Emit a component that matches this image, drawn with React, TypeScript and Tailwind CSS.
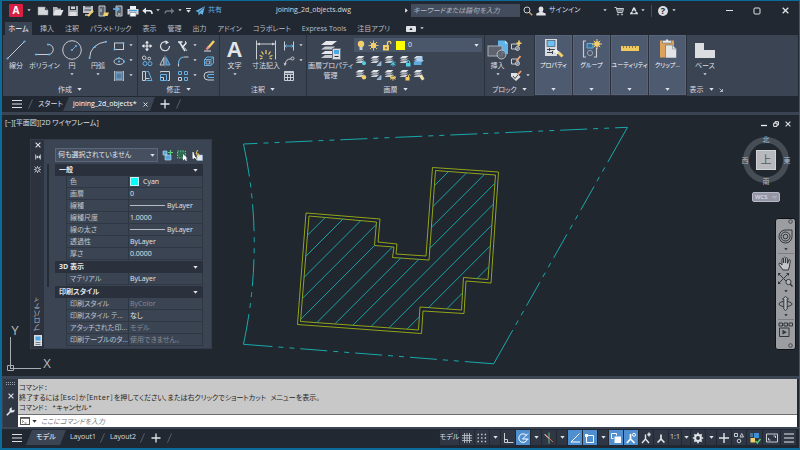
import type { ReactNode } from "react";

const BLUE = "#62b1e6";
const GREY = "#c9cdd4";
const YELLOW = "#f3cf6b";

type IconProps = { w?: number; h?: number; box?: string; children: ReactNode };

// Line icon base: light grey strokes, 1px by default
function Icon({ w = 12, h = 12, box, children }: IconProps) {
  return (
    <svg
      width={w}
      height={h}
      viewBox={box ?? `0 0 ${w} ${h}`}
      fill="none"
      stroke={GREY}
      strokeWidth="1"
      className="block shrink-0"
      aria-hidden="true"
    >
      {children}
    </svg>
  );
}

function Caret({ dark = false }: { dark?: boolean }) {
  return (
    <svg width="5" height="3" viewBox="0 0 5 3" className="block shrink-0" aria-hidden="true">
      <path d="M0.3 0H4.7L2.5 2.8Z" fill={dark ? "#333" : "#dfe2e7"} />
    </svg>
  );
}

function TinyCaret({ dark = false }: { dark?: boolean }) {
  return (
    <svg width="4" height="3" viewBox="0 0 4 3" className="block shrink-0" aria-hidden="true">
      <path d="M0.3 0.3H3.7L2 2.3Z" fill={dark ? "#222" : "#d5d8dd"} />
    </svg>
  );
}

function Hamburger() {
  return (
    <Icon w={10} h={10}>
      <path d="M0 1.5H10M0 5H10M0 8.5H10" stroke="#dcdfe4" strokeWidth="1.2" />
    </Icon>
  );
}

function Slash() {
  return (
    <Icon w={5} h={10}>
      <path d="M4.5 0.5L0.5 9.5" stroke="#56606e" />
    </Icon>
  );
}

function Plus() {
  return (
    <Icon w={10} h={10}>
      <path d="M5 0.5V9.5M0.5 5H9.5" stroke="#e3e5e9" strokeWidth="1.3" />
    </Icon>
  );
}

function Cross({ size = 6 }: { size?: number }) {
  return (
    <Icon w={size} h={size} box="0 0 6 6">
      <path d="M0.6 0.6L5.4 5.4M5.4 0.6L0.6 5.4" stroke="#dfe2e7" strokeWidth="1.1" />
    </Icon>
  );
}

function Slot({ label, className, children }: { label: string; className?: string; children: ReactNode }) {
  return (
    <button aria-label={label} className={`flex shrink-0 items-center justify-center ${className ?? "h-4 w-[15px]"}`}>
      {children}
    </button>
  );
}

/* ---------- title bar ---------- */

const quickAccess: { label: string; icon: ReactNode }[] = [
  {
    label: "新規",
    icon: <path d="M1 2H8L11 5V10H1Z M8 2V5H11" fill="#d4d6da" stroke="#8e949e" strokeWidth="0.5" />,
  },
  {
    label: "開く",
    icon: (
      <>
        <path d="M1 10V2H5L6 3.5H9V5" fill="#aeb2b8" stroke="none" />
        <path d="M1 10.5L3.2 5H11.5L9 10.5Z" fill="#dfe1e4" stroke="none" />
      </>
    ),
  },
  {
    label: "上書き保存",
    icon: (
      <>
        <path d="M1 1H11V11H1Z" fill="#a9adb4" stroke="none" />
        <path d="M3 1H9V5H3Z" fill="#2e3541" stroke="none" />
        <path d="M2.5 7H9.5V11H2.5Z" fill="#dedfe2" stroke="none" />
        <path d="M4 1.5H8V4H4Z" fill="#cfd2d6" stroke="none" />
      </>
    ),
  },
  {
    label: "名前を付けて保存",
    icon: (
      <>
        <path d="M1 1H11V8H1Z" fill="#bfc2c7" stroke="none" />
        <path d="M3 1.8H9M2.5 5H9" stroke="#3a4250" />
        <path d="M3 9H8V11H3Z" fill="#989ea7" stroke="none" />
        <path d="M6 11L11 5.5" stroke={YELLOW} strokeWidth="2" />
      </>
    ),
  },
  {
    label: "Web から開く",
    icon: (
      <>
        <path d="M2 1H8V11H2Z" fill="#5b626e" stroke="#c5c8cd" />
        <path d="M6 11L7 7.5H12L10.6 11Z" fill={YELLOW} stroke="none" />
        <path d="M4 3.5V7" stroke="#d8dade" />
      </>
    ),
  },
  {
    label: "Web に保存",
    icon: (
      <>
        <path d="M4 1H10V11H4Z" fill="#5b626e" stroke="#c5c8cd" />
        <path d="M1 4H6M4.5 2L7 4L4.5 6" stroke={BLUE} strokeWidth="1.4" />
        <path d="M6 9H8.5" stroke="#eee" />
      </>
    ),
  },
  {
    label: "印刷",
    icon: (
      <>
        <path d="M3 1H9V4H3Z" fill="#f0f1f3" stroke="none" />
        <path d="M0.5 4H11.5V9.5H0.5Z" fill="#d5d8dc" stroke="none" />
        <path d="M2 5.6H10" stroke="#3e9fdd" strokeWidth="1.2" />
        <path d="M3 7.5H9V11.5H3Z" fill="#fff" stroke="#6d747f" strokeWidth="0.6" />
      </>
    ),
  },
];

function TitleBar() {
  return (
    <header className="flex h-[19px] items-center text-[7px]">
      <div className="flex w-[274px] shrink-0 items-center">
        <button aria-label="アプリケーション メニュー" className="ml-[7px] flex items-center gap-1">
          <span className="flex h-[13px] w-[14px] items-center justify-center rounded-[1px] bg-[#d91e43] text-[10px] leading-[13px] font-bold text-white">
            A
          </span>
          <TinyCaret />
        </button>
        <div className="ml-1 flex">
          {quickAccess.map((q) => (
            <Slot key={q.label} label={q.label}>
              <Icon>{q.icon}</Icon>
            </Slot>
          ))}
        </div>
        <button aria-label="元に戻す" className="ml-0.5 flex w-[18px] items-center justify-between">
          <Icon w={11} h={8}>
            <path d="M4 0.5V7L0.3 3.8Z" fill="#e8eaed" stroke="none" />
            <path d="M3 3.8H8Q10 4 10 7" stroke="#e8eaed" strokeWidth="1.5" />
          </Icon>
          <TinyCaret />
        </button>
        <button aria-label="やり直し" className="ml-1 flex w-[18px] items-center justify-between">
          <Icon w={11} h={8}>
            <path d="M7 1V7L10.4 4Z" fill="#6f7783" stroke="none" />
            <path d="M7.5 4H3Q1.3 4 1 6.6" stroke="#6f7783" strokeWidth="1.3" />
          </Icon>
          <TinyCaret />
        </button>
        <button aria-label="カスタマイズ" className="ml-1 flex flex-col items-center gap-px">
          <span className="h-px w-[5px] bg-[#dfe2e7]" />
          <Caret />
        </button>
        <button className="ml-1 flex items-center gap-[3px] text-[#62b1e6]">
          <Icon w={10} h={10}>
            <path d="M9.8 0.3L0.5 5L3.2 6.3L3.7 9.6L5.3 7.4L7.8 8.8Z" fill={BLUE} stroke="none" />
            <path d="M9 1.5L3.6 6.2" stroke="#222831" strokeWidth="0.6" />
          </Icon>
          共有
        </button>
      </div>

      <h1 className="w-[80px] shrink-0 whitespace-nowrap text-[#d7dade]">joining_2d_objects.dwg</h1>

      <div className="flex flex-1 items-center pl-[49px]">
        <Icon w={3} h={5}>
          <path d="M0.2 0.3V4.7L2.8 2.5Z" fill="#eee" stroke="none" />
        </Icon>
        <input
          aria-label="検索"
          placeholder="キーワードまたは語句を入力"
          className="ml-[3px] h-[13px] w-[109px] bg-[#434c5c] px-0.5 italic outline-none placeholder:text-[#b4b9c1]"
        />
        <Slot label="検索を実行">
          <Icon w={10} h={10}>
            <circle cx="4" cy="4" r="3" />
            <path d="M6.2 6.2L9.3 9.3" stroke="#c9a15c" strokeWidth="1.5" />
          </Icon>
        </Slot>
        <button className="ml-px flex items-center gap-[3px] whitespace-nowrap">
          <Icon w={10} h={10}>
            <path
              d="M2.6 3A2.4 2.6 0 0 1 7.4 3Q7.2 5.4 6.3 6L9.7 7.5V9.6H0.3V7.5L3.7 6Q2.8 5.4 2.6 3Z"
              fill="#e0e2e6"
              stroke="none"
            />
          </Icon>
          サインイン
        </button>
      </div>

      <div className="flex items-center">
        <TinyCaret />
        <Slot label="App Store" className="ml-1 h-4 w-[15px]">
          <Icon w={10} h={10}>
            <path d="M0.5 1.5H2.3L3.5 6.5H8.5L9.5 2.5H2.6" />
            <path d="M3 4H9M5 2.5V6.5M7 2.5V6.5" strokeWidth="0.7" />
            <circle cx="4" cy="8.5" r="0.6" />
            <circle cx="8" cy="8.5" r="0.6" />
          </Icon>
        </Slot>
        <Slot label="Autodesk">
          <Icon w={10} h={10}>
            <path d="M4.2 1.5H5.8L7.6 5.4H5.9L5 3.4L4.1 5.4H2.4Z" fill="#e3e5e9" stroke="none" />
            <path d="M0.8 8.3L1.9 6H3.8L3.2 7.2H6.8L6.2 6H8.1L9.2 8.3Z" fill="#e3e5e9" stroke="none" />
          </Icon>
        </Slot>
        <TinyCaret />
        <span className="mx-1.5 h-3 w-px bg-[#444c59]" />
        <Slot label="ヘルプ" className="h-4 w-[10px]">
          <span className="flex size-[10px] items-center justify-center rounded-full bg-[#dcdee2] text-[9px] leading-[10px] font-bold text-[#222831]">
            ?
          </span>
        </Slot>
        <span className="ml-1">
          <TinyCaret />
        </span>
        <Slot label="最小化" className="ml-11 h-4 w-[18px]">
          <Icon w={7} h={7}>
            <path d="M0 3.5H7" stroke="#dfe2e7" />
          </Icon>
        </Slot>
        <Slot label="最大化" className="ml-[10px] h-4 w-[18px]">
          <Icon w={8} h={8}>
            <rect x="1" y="1" width="6" height="6" rx="1" stroke="#dfe2e7" />
          </Icon>
        </Slot>
        <Slot label="閉じる" className="mr-[5px] ml-[10px] h-4 w-[18px]">
          <Cross size={7} />
        </Slot>
      </div>
    </header>
  );
}

/* ---------- ribbon ---------- */

const ribbonTabs = [
  "挿入",
  "注釈",
  "パラメトリック",
  "表示",
  "管理",
  "出力",
  "アドイン",
  "コラボレート",
  "Express Tools",
  "注目アプリ",
];

function RibbonTabs() {
  return (
    <nav className="flex h-[15px] items-end pl-[3px] text-[7px] leading-[13px] whitespace-nowrap text-[#b9bec7]">
      <button className="h-[13px] w-[27px] bg-[#3b4453] text-white">ホーム</button>
      <div className="ml-2 flex gap-[11px]">
        {ribbonTabs.map((t) => (
          <button key={t}>{t}</button>
        ))}
      </div>
      <button aria-label="リボンを最小化" className="ml-4 flex h-[13px] items-center gap-1">
        <Icon w={10} h={6}>
          <rect width="10" height="6" rx="1" fill="#dfe2e7" stroke="none" />
          <path d="M5 1.6L6.6 4H3.4Z" fill="#222831" stroke="none" />
        </Icon>
        <TinyCaret />
      </button>
    </nav>
  );
}

type PanelProps = { title: string; width: string; children: ReactNode; launcher?: boolean };

function Panel({ title, width, children, launcher }: PanelProps) {
  return (
    <section className={`flex flex-col justify-between bg-[#3b4453] pt-[3px] pb-0.5 ${width}`}>
      <div className="flex">{children}</div>
      <button className="flex items-center justify-center gap-[5px] text-[7px] leading-[9px]">
        {title}
        <Caret />
        {launcher && (
          <Icon w={4} h={4}>
            <path d="M0.5 0.5L3.5 3.5M3.5 1V3.5H1" strokeWidth="0.8" />
          </Icon>
        )}
      </button>
    </section>
  );
}

type BigButtonProps = { label: ReactNode; width: string; caret?: boolean; children: ReactNode };

function BigButton({ label, width, caret, children }: BigButtonProps) {
  return (
    <button className={`flex shrink-0 flex-col items-center whitespace-nowrap ${width}`}>
      <span className="flex h-[23px] items-center">{children}</span>
      <span className="text-[7px] leading-[10px]">{label}</span>
      {caret && (
        <span className="pt-0.5">
          <TinyCaret />
        </span>
      )}
    </button>
  );
}

function SmallButton({ label, caret, children }: { label: string; caret?: boolean; children: ReactNode }) {
  return (
    <button aria-label={label} className="flex h-[15px] items-center gap-1">
      <Icon>{children}</Icon>
      {caret && <TinyCaret />}
    </button>
  );
}

function Node({ x, y }: { x: number; y: number }) {
  return <circle cx={x} cy={y} r="1.1" fill={BLUE} stroke="none" />;
}

function DrawPanel() {
  return (
    <Panel title="作成" width="w-[134px]">
      <BigButton label="線分" width="w-[26px]">
        <Icon w={20} h={20}>
          <path d="M1 19L19 1" />
          <Node x={1.5} y={18.5} />
          <Node x={18.5} y={1.5} />
        </Icon>
      </BigButton>
      <BigButton label="ポリライン" width="w-[31px]">
        <Icon w={22} h={20}>
          <path d="M14 4.5A4.5 4.8 0 0 1 15 14.5H2" />
          <Node x={14} y={4.5} />
          <Node x={15} y={14.5} />
          <Node x={2} y={14.5} />
        </Icon>
      </BigButton>
      <BigButton label="円" width="w-[24px]" caret>
        <Icon w={20} h={20}>
          <circle cx="10" cy="10" r="9.3" />
          <path d="M10 10L14 6" stroke={BLUE} />
          <Node x={10} y={10} />
          <Node x={14} y={6} />
        </Icon>
      </BigButton>
      <BigButton label="円弧" width="w-[28px]" caret>
        <Icon w={20} h={20}>
          <path d="M1.5 18.5Q2 4 18.5 1.5" />
          <Node x={1.6} y={18} />
          <Node x={7} y={7} />
          <Node x={18} y={1.8} />
        </Icon>
      </BigButton>
      <div className="ml-px flex flex-col">
        <SmallButton label="長方形" caret>
          <rect x="1.5" y="3" width="9" height="6.5" />
          <Node x={1.6} y={9.4} />
          <Node x={10.4} y={3} />
        </SmallButton>
        <SmallButton label="楕円" caret>
          <ellipse cx="6" cy="6.5" rx="5" ry="3" />
          <Node x={6} y={6.5} />
          <Node x={6} y={3.2} />
          <Node x={11} y={6.5} />
        </SmallButton>
        <SmallButton label="ハッチング" caret>
          <path d="M3 3H9V9H3Z" fill="#5a7896" stroke={BLUE} />
          <path d="M1.5 1V11M10.5 1V11M1 2H11M1 10H11" strokeWidth="0.8" />
        </SmallButton>
      </div>
    </Panel>
  );
}

function ModifyPanel() {
  return (
    <Panel title="修正" width="w-[81px]">
      <div className="grid grid-cols-[12px_12px_20px_12px] gap-x-1.5 pl-[3px]">
        <SmallButton label="移動">
          <path d="M6 1.5V10.5M1.5 6H10.5" stroke="#e6e8eb" strokeWidth="1.2" />
          <path d="M6 0.8L8 3.3H4ZM6 11.2L4 8.7H8ZM0.8 6L3.3 4V8ZM11.2 6L8.7 8V4Z" fill="#e6e8eb" stroke="none" />
        </SmallButton>
        <SmallButton label="回転">
          <path d="M8.5 2.5A4.5 4.5 0 1 0 10.5 6" stroke="#dfe1e5" strokeWidth="1.2" />
          <path d="M6.6 0.3V4.6L10 2.4Z" fill="#dfe1e5" stroke="none" />
        </SmallButton>
        <SmallButton label="トリム" caret>
          <path d="M1 2H5.5M2.5 2L8 11M9.5 2.5L5 8" stroke="#e6e8eb" strokeWidth="1.5" />
          <path d="M8.5 1V5M7.5 7.5L10 11" stroke={GREY} />
        </SmallButton>
        <SmallButton label="削除">
          <path d="M11 1L5 8" stroke={YELLOW} strokeWidth="2.4" />
          <path d="M5.5 7L3.5 9.5" stroke="#f08a7d" strokeWidth="2.4" />
          <path d="M1 11H8" stroke="#dfe1e5" />
        </SmallButton>
        <SmallButton label="複写">
          <circle cx="3.2" cy="2.8" r="1.8" />
          <circle cx="8.2" cy="3.6" r="1.4" />
          <circle cx="4" cy="8.5" r="2" stroke={BLUE} />
          <circle cx="9" cy="8.7" r="2" stroke={BLUE} />
        </SmallButton>
        <SmallButton label="鏡像">
          <path d="M4.8 2.5V10H1Z" />
          <path d="M7.2 2.5V10H11Z" stroke={BLUE} fill="#4d6e8e" />
          <path d="M6 0.5V11.5" strokeWidth="0.6" />
        </SmallButton>
        <SmallButton label="フィレット" caret>
          <path d="M1.5 11V8Q2 2.5 7 2" stroke={BLUE} strokeWidth="1.2" />
          <path d="M7 2H11.5M1.5 11.5V9" />
        </SmallButton>
        <SmallButton label="分解">
          <path d="M1.5 4.5L4 2H10.5V8L8 10.5H1.5ZM1.5 4.5H8V10.5M8 4.5L10.5 2" stroke={BLUE} />
          <path d="M3 6H6.5V9H3Z" strokeWidth="0.7" />
        </SmallButton>
        <SmallButton label="ストレッチ">
          <path d="M1.5 1.5H4.5V10.5H1.5Z" />
          <path d="M5.5 1.5H7.5L11 10.5H5.5" stroke={BLUE} />
          <path d="M4 8.5H8.5" />
        </SmallButton>
        <SmallButton label="尺度変更">
          <path d="M1.5 2.5V1.5H10.5V10.5H8.5" />
          <path d="M1.5 4.5H7.5V10.5H1.5Z" stroke={BLUE} />
          <path d="M1.5 7.5H4.5V10.5" />
        </SmallButton>
        <SmallButton label="配列複写" caret>
          <path d="M1.5 1.5H4.5V4.5H1.5ZM7.5 1.5H10.5V4.5H7.5ZM7.5 7.5H10.5V10.5H7.5Z" stroke={BLUE} />
          <path d="M1.5 7.5H4.5V10.5H1.5Z" />
        </SmallButton>
        <SmallButton label="オフセット">
          <path d="M11 2H5A4 4 0 0 0 5 10H11" />
          <path d="M11 4.5H6A1.5 1.5 0 0 0 6 7.5H11" stroke={BLUE} />
        </SmallButton>
      </div>
    </Panel>
  );
}

function AnnotationPanel() {
  return (
    <Panel title="注釈" width="w-[86px]">
      <BigButton label="文字" width="w-[29px]" caret>
        <span className="font-['Liberation_Sans'] text-[22px] leading-[22px] font-bold text-[#e3e5e9]">A</span>
      </BigButton>
      <BigButton label="寸法記入" width="w-[34px]">
        <Icon w={22} h={20}>
          <path d="M1.5 0.5V19.5M20.5 0.5V19.5M2 4H20" />
          <path d="M2 4L5 2.5V5.5ZM20 4L17 2.5V5.5Z" fill={GREY} stroke="none" />
          <path
            d="M11 10V14M6.5 11.5L8.5 14.5M15.5 11.5L13.5 14.5M4.5 15.5L7.5 16.5M17.5 15.5L14.5 16.5M5 19L7.5 18M17 19L14.5 18"
            stroke={YELLOW}
            strokeWidth="1.2"
          />
        </Icon>
      </BigButton>
      <div className="flex flex-col">
        <SmallButton label="長さ寸法" caret>
          <path d="M1.5 1.5V10.5M10.5 1.5V10.5" />
          <path d="M2 6H10M3.5 4.5L2 6L3.5 7.5M8.5 4.5L10 6L8.5 7.5" stroke={BLUE} />
        </SmallButton>
        <SmallButton label="引出線" caret>
          <circle cx="9.5" cy="3.5" r="1.5" />
          <path d="M8 4Q3 3.5 2 9.5" />
          <path d="M0.7 8L1.7 11L3.8 8.5Z" fill={GREY} stroke="none" />
        </SmallButton>
        <SmallButton label="表">
          <path d="M1.5 1.5H10.5V10.5H1.5ZM1.5 4.5H10.5M1.5 7.5H10.5M4.5 4V10.5M7.5 4V10.5" />
          <path d="M1 2.5H11" strokeWidth="1.6" />
        </SmallButton>
      </div>
    </Panel>
  );
}

function Sheets() {
  return (
    <>
      <path d="M3.5 1H9.5L6.5 3.4H0.5Z" fill="#e6e8eb" stroke="none" />
      <path d="M3 4L0.5 5.8H6.5L9.5 3.4" fill="#aab0b9" stroke="none" />
      <path d="M2.5 6.4L0.5 8H6.5L9.5 5.6" fill="#d0d3d8" stroke="none" />
    </>
  );
}

const layerTools: { label: string; mark: ReactNode }[] = [
  { label: "非表示", mark: <circle cx="9" cy="8.2" r="2" fill="#4fd0e8" stroke="none" /> },
  { label: "選択表示", mark: <path d="M7 10.5L11 6.5V10.5Z" fill={BLUE} stroke="#dfe1e5" strokeWidth="0.6" /> },
  { label: "フリーズ", mark: <path d="M9 6V11.5M6.5 7.3L11.5 10.2M11.5 7.3L6.5 10.2" stroke="#4fd0e8" /> },
  {
    label: "ロック",
    mark: (
      <>
        <path d="M8 8V7A1.3 1.3 0 0 1 10.6 7V8" stroke="#4fd0e8" />
        <path d="M7 8H11.5V11.5H7Z" fill="#4fd0e8" stroke="none" />
      </>
    ),
  },
  {
    label: "現在層に設定",
    mark: (
      <>
        <path d="M0.8 7L3.5 5H11.2L8.5 7.5V10H0.8Z" fill="#5fa9dd" stroke="none" />
        <path d="M3.5 1.5H9.5V6.5H3.5Z" fill="#a9cdea" stroke="none" />
      </>
    ),
  },
  { label: "全画層表示", mark: <circle cx="9" cy="8.2" r="2.2" fill={YELLOW} stroke="none" /> },
  { label: "選択表示解除", mark: <path d="M7 10.5L11 6.5V10.5Z" fill={BLUE} stroke="#dfe1e5" strokeWidth="0.6" /> },
  {
    label: "フリーズ解除",
    mark: <path d="M9 5.8V11.6M6.3 7.2L11.6 10.3M11.6 7.2L6.3 10.3M6 8.7H12" stroke={YELLOW} />,
  },
  {
    label: "ロック解除",
    mark: (
      <>
        <path d="M9.5 8V6.5A1.2 1.2 0 0 1 11.7 6.5" stroke={YELLOW} />
        <path d="M6.5 8H10.5V11.5H6.5Z" fill={YELLOW} stroke="none" />
      </>
    ),
  },
  { label: "画層コピー", mark: <path d="M6 7L9 5.5L11.5 10L9 11.5Z" fill="#f1e2ae" stroke="none" /> },
];

function LayerPanel() {
  return (
    <Panel title="画層" width="w-[177px]">
      <BigButton
        width="w-[47px]"
        label={
          <>
            画層プロパティ
            <br />
            管理
          </>
        }
      >
        <Icon w={22} h={20}>
          <path d="M6 1H17L12 5H1Z" fill="#e6e8eb" stroke="none" />
          <path d="M1 9.5L5 6.5H15L12 9.5Z" fill="#c5c9cf" stroke="none" />
          <path d="M1 14L5 11H14L12 14Z" fill="#e6e8eb" stroke="none" />
          <path d="M1 18L5 15H14L12 18Z" fill="#c5c9cf" stroke="none" />
          <rect x="12.5" y="8.5" width="8" height="11" fill="#dadce0" stroke="#6b7584" />
          <rect x="14" y="10" width="5" height="4" fill="#4aa7e6" stroke="none" />
          <path d="M14.5 16.5H18.5" stroke="#333" />
        </Icon>
      </BigButton>
      <div className="flex flex-1 flex-col pr-0.5">
        <div className="flex h-[14px] items-center gap-[3px] bg-[#4a566a] px-[3px]">
          <Icon w={8} h={11}>
            <circle cx="4" cy="4" r="3.2" fill={YELLOW} stroke="none" />
            <path d="M2.5 7H5.5V10H2.5Z" fill="#c9cdd4" stroke="none" />
          </Icon>
          <Icon w={11} h={11}>
            <path d="M5.5 0.5V10.5M0.5 5.5H10.5M2 2L9 9M9 2L2 9" stroke={YELLOW} strokeWidth="0.9" />
            <circle cx="5.5" cy="5.5" r="2.7" fill={YELLOW} stroke="none" />
          </Icon>
          <Icon w={10} h={11}>
            <path d="M5.5 5V3A1.6 1.6 0 0 1 8.8 3V4" stroke={YELLOW} strokeWidth="1.3" />
            <path d="M1 5H7V10.5H1Z" fill={YELLOW} stroke="none" />
            <path d="M4 7V8.8" stroke="#333" />
          </Icon>
          <span className="ml-px size-[9px] bg-[#ffff00]" />
          <select
            aria-label="現在の画層"
            className="h-3 flex-1 appearance-none bg-transparent p-0 text-[7px] text-[#e3e5e9] outline-none"
          >
            <option>0</option>
          </select>
          <Caret />
        </div>
        <div className="mt-0.5 grid w-[73px] grid-cols-5">
          {layerTools.map((t) => (
            <button key={t.label} aria-label={t.label} className="flex h-[14px] items-center pl-px">
              <Icon>
                <Sheets />
                {t.mark}
              </Icon>
            </button>
          ))}
        </div>
      </div>
    </Panel>
  );
}

function BlockPanel() {
  return (
    <Panel title="ブロック" width="w-[49px]">
      <BigButton label="挿入" width="w-[25px]" caret>
        <Icon w={22} h={20}>
          <path d="M11 0.5H18L21 3.5V14H11Z" fill="#5fb4ea" stroke="none" />
          <path d="M18 0.5V3.5H21Z" fill="#c6e3f7" stroke="none" />
          <rect x="1" y="6" width="14" height="10" fill="#5d646f" stroke="#a8adb5" />
          <circle cx="14.5" cy="14.5" r="4.5" fill="#5d646f" fillOpacity="0.8" stroke="#b9bec5" />
        </Icon>
      </BigButton>
      <div className="flex flex-col">
        <SmallButton label="ブロック作成">
          <path d="M1.5 4H8V9H1.5Z" />
          <circle cx="7.5" cy="8.5" r="2" />
          <path d="M9 0.5V6M6.5 3.2H11.5" stroke={YELLOW} strokeWidth="1.6" />
        </SmallButton>
        <SmallButton label="ブロック編集">
          <path d="M1.5 4H8V9H1.5Z" />
          <circle cx="7.5" cy="8.5" r="2" />
          <path d="M10.5 1L6.5 6" stroke="#f3a26b" strokeWidth="1.8" />
        </SmallButton>
        <SmallButton label="属性編集" caret>
          <path d="M1 3H7L10.5 7L6 11L1 6.5Z" fill="#dfe1e5" stroke="none" />
          <path d="M3 6L5 8.5L8 5" stroke="#3b4453" />
          <path d="M11 1L7.5 5" stroke="#f3a26b" strokeWidth="1.8" />
        </SmallButton>
      </div>
    </Panel>
  );
}

const collapsedPanels: { label: string; icon: ReactNode }[] = [
  {
    label: "プロパティ",
    icon: (
      <>
        <rect x="1" y="1" width="12" height="17" fill="#d9dbdf" stroke="none" />
        <rect x="3" y="2.5" width="8" height="6" fill="#6fc0f1" stroke="#3a4250" strokeWidth="0.6" />
        <path d="M3 11.5H11M3 14.5H9M5.5 10V13M8.5 13V16" stroke="#3a4250" />
        <path d="M10.5 12L14.5 15" stroke="#f0f1f3" strokeWidth="3" />
        <path d="M14.5 14.5L18.5 18.5" stroke={YELLOW} strokeWidth="3" />
      </>
    ),
  },
  {
    label: "グループ",
    icon: (
      <>
        <path d="M4 3H1.5V19H4M12 19H14.5V10" strokeWidth="1.2" />
        <path d="M5 5.5H11V10H5Z" stroke={BLUE} fill="#3d6f99" />
        <circle cx="8" cy="15" r="2.6" stroke="#9ba1aa" />
        <path d="M15 1V11M10 6H20M11.8 2.8L18.2 9.2M18.2 2.8L11.8 9.2" stroke={YELLOW} />
        <circle cx="15" cy="6" r="2.8" fill={YELLOW} stroke="none" />
      </>
    ),
  },
  {
    label: "ユーティリティ",
    icon: (
      <>
        <rect x="1" y="8" width="18" height="5" fill="#f0c960" stroke="none" />
        <path d="M3.5 8V10M6.5 8V10M9.5 8V10M12.5 8V10M15.5 8V10" stroke="#7d6b3b" strokeWidth="0.8" />
      </>
    ),
  },
  {
    label: "クリップ...",
    icon: (
      <>
        <path d="M2 2.5H16V19.5H2Z" fill="#dda35a" stroke="none" />
        <path d="M4.5 5V2.5H7.5Q9 -1 10.5 2.5H13.5V5Z" fill="#e6e8eb" stroke="#4d5a70" strokeWidth="0.5" />
        <path d="M7.5 7H14.5L18.5 11V20H7.5Z" fill="#e3e4e7" stroke="#5d646f" strokeWidth="0.6" />
        <path d="M14.5 7V11H18.5" stroke="#8c929b" strokeWidth="0.7" />
      </>
    ),
  },
];

function Ribbon() {
  return (
    <div className="mx-px flex h-[61px] gap-px bg-[#2a313c]">
      <DrawPanel />
      <ModifyPanel />
      <AnnotationPanel />
      <LayerPanel />
      <BlockPanel />
      {collapsedPanels.map((p) => (
        <button
          key={p.label}
          className="mb-px flex w-[37px] flex-col items-center justify-between border border-[#566379] bg-[#4d5a70] pt-0.5 pb-[3px] text-[6px] leading-[10px] whitespace-nowrap text-white"
        >
          <span className="flex flex-col items-center gap-0.5">
            <Icon w={20} h={20}>
              {p.icon}
            </Icon>
            {p.label}
          </span>
          <Caret />
        </button>
      ))}
      <div className="flex flex-1 bg-[#3b4453]">
        <Panel title="表示" width="w-[38px]" launcher>
          <BigButton label="ベース" width="w-[36px]" caret>
            <Icon w={20} h={16}>
              <path d="M0 1H9V8H20V16H0Z" fill="#dcdde0" stroke="none" />
            </Icon>
          </BigButton>
        </Panel>
      </div>
    </div>
  );
}

function FileTabs() {
  return (
    <nav className="flex h-4 items-center pl-[10px] text-[7px] leading-[14px] whitespace-nowrap">
      <button aria-label="ファイル メニュー">
        <Hamburger />
      </button>
      <span className="ml-1.5">
        <Slash />
      </span>
      <button className="ml-[5px] w-[25px]">スタート</button>
      <div className="flex h-[14px] w-[92px] items-center justify-between bg-[#3b4453] pr-[7px] pl-[10px] text-white [clip-path:polygon(6px_0,100%_0,calc(100%-5px)_100%,0_100%)]">
        <button>joining_2d_objects*</button>
        <button aria-label="タブを閉じる">
          <Cross size={5} />
        </button>
      </div>
      <button aria-label="新しい図面" className="ml-[5px]">
        <Plus />
      </button>
      <span className="ml-1.5">
        <Slash />
      </span>
    </nav>
  );
}

/* ---------- drawing area ---------- */

// Phantom linetype: a long dash, then two short ones, repeated
function phantom(end: number, repeats: number) {
  const pattern = [end];
  for (let i = 0; i < repeats; i++) pattern.push(6, 5, 6, 5, 6, 27);
  return [...pattern, 6, 5, 6, 5, 6, end].join(" ");
}

const OUTER =
  "306,213 380,219 378,242 397,244 396,254 426,256 432.5,167.5 498.5,172 491,283 466,281 464,313.5 423,311 421.5,333.5 297.5,324.5";
const INNER =
  "309,216 376.5,222 374.5,245.5 394,247 392.5,257.5 429,260 435.5,170.5 495.5,175 488,279.5 463.5,277.5 461.5,310 420,307 418.5,330 300.5,321.5";

const hatchSums = Array.from({ length: 12 }, (_, i) => 542.7 + 19.35 * i);

function SitePlan() {
  return (
    <svg className="absolute inset-0 size-full" role="img" aria-label="敷地図">
      <defs>
        <clipPath id="footprint">
          <polygon points={INNER} />
        </clipPath>
      </defs>
      <g transform="translate(-2 -115)" fill="none">
        <g stroke="#18a9ad" strokeWidth="1">
          <path d="M243.5 144L627.5 127.3" strokeDasharray={phantom(14, 6)} />
          <path d="M627.5 127.3L493.7 363.8" strokeDasharray={phantom(40, 3)} />
          <path d="M243.5 344.3L493.7 363.8" strokeDasharray={phantom(29, 3)} />
          <path d="M243.5 144Q265 243 243.5 344.3" strokeDasharray={phantom(33, 2)} />
        </g>
        <polygon points={OUTER} fill="#1b1f33" stroke="#93a615" />
        <polygon points={INNER} fill="#21272f" stroke="#93a615" />
        <g clipPath="url(#footprint)" stroke="#1aa3a7">
          {hatchSums.map((s) => (
            <path key={s} d={`M290 ${s - 290}L510 ${s - 510}`} />
          ))}
        </g>
        {/* UCS icon */}
        <path d="M7.5 365.5H13.5V370.5H7.5ZM10.5 337V368M10 368.5H41" stroke="#a9adb2" />
        <g fill="#b4b7bc" fontSize="12" fontFamily="Liberation Sans, sans-serif">
          <text x="11" y="335">
            Y
          </text>
          <text x="43" y="368">
            X
          </text>
        </g>
      </g>
    </svg>
  );
}

type Row = { name: string; value: string; line?: boolean; swatch?: boolean; dim?: boolean };

const sections: { title: string; rows: Row[] }[] = [
  {
    title: "一般",
    rows: [
      { name: "色", value: "Cyan", swatch: true },
      { name: "画層", value: "0" },
      { name: "線種", value: "ByLayer", line: true },
      { name: "線種尺度", value: "1.0000" },
      { name: "線の太さ", value: "ByLayer", line: true },
      { name: "透過性", value: "ByLayer" },
      { name: "厚さ", value: "0.0000" },
    ],
  },
  { title: "3D 表示", rows: [{ name: "マテリアル", value: "ByLayer" }] },
  {
    title: "印刷スタイル",
    rows: [
      { name: "印刷スタイル", value: "ByColor", dim: true },
      { name: "印刷スタイル テ...", value: "なし" },
      { name: "アタッチされた印...", value: "モデル", dim: true },
      { name: "印刷テーブルのタ...", value: "使用できません。", dim: true },
    ],
  },
];

function PropertiesPalette() {
  return (
    <aside className="absolute top-6 left-7 flex w-[182px] border border-[#343c49] bg-[#2c333f] text-[7px]">
      <div className="flex w-[13px] flex-col items-center gap-1.5 py-0.5">
        <button aria-label="閉じる">
          <Cross size={6} />
        </button>
        <button aria-label="自動的に隠す">
          <Icon w={6} h={6}>
            <path d="M0.7 0.5V5.5M5.3 0.5V5.5" />
            <path d="M1 3L3 1.5V4.5ZM5 1.5V4.5L3 3Z" fill="#dfe2e7" stroke="none" />
          </Icon>
        </button>
        <button aria-label="パレット設定">
          <Icon w={7} h={7}>
            <circle cx="3.5" cy="3.5" r="1.8" />
            <path
              d="M0.5 0.5L2 2M6.5 0.5L5 2M0.5 6.5L2 5M6.5 6.5L5 5M3.5 0V1.5M3.5 5.5V7M0 3.5H1.5M5.5 3.5H7"
              strokeWidth="0.8"
            />
          </Icon>
        </button>
        <div className="flex flex-1 flex-col items-center justify-end gap-1">
          <span className="rotate-180 leading-[9px] text-[#aeb3bb] [writing-mode:vertical-rl]">プロパティ</span>
          <Icon w={8} h={11}>
            <rect width="8" height="11" fill="#dadce0" stroke="none" />
            <rect x="1.5" y="1.5" width="5" height="4" fill="#4aa7e6" stroke="none" />
            <path d="M1.5 7.5H6.5M1.5 9.5H6.5" stroke="#4b5260" strokeWidth="0.7" />
          </Icon>
        </div>
      </div>
      <div className="flex flex-1 gap-1.5 bg-[#3b4453] pt-2 pr-2 pb-0.5 pl-[3px]">
        <div className="mt-4 h-[123px] w-0.5 bg-[#262c36]" />
        <div className="flex flex-1 flex-col">
          <div className="mb-0.5 flex items-center gap-1">
            <div className="flex h-[14px] w-[103px] items-center border border-[#5b677a] bg-[#454f60] pr-0.5">
              <select
                aria-label="選択オブジェクト"
                className="h-3 min-w-0 flex-1 appearance-none bg-transparent pl-0.5 text-[7px] text-[#e3e5e9] outline-none"
              >
                <option>何も選択されていません</option>
              </select>
              <Caret />
            </div>
            <div className="flex gap-1">
              <button aria-label="PICKADD 切り替え">
                <Icon w={11} h={11}>
                  <path d="M1 1H5V5H1ZM3 5H9V10H3Z" fill="#58a6da" stroke="#c4def1" strokeWidth="0.6" />
                  <path d="M8.5 0V5M6 2.5H11" stroke="#5bd07d" strokeWidth="1.2" />
                </Icon>
              </button>
              <button aria-label="オブジェクト選択">
                <Icon w={11} h={11}>
                  <rect x="0.5" y="1" width="8" height="7" fill="#2f6b50" stroke="#57c98b" strokeDasharray="1.5 1" />
                  <path d="M6 4V10.5L7.6 9L9 11L10 10.3L8.8 8.4H10.5Z" fill="#fff" stroke="none" />
                </Icon>
              </button>
              <button aria-label="クイック選択">
                <Icon w={11} h={11}>
                  <path d="M5 5H10.5V10.5H5Z" fill="#e6e8eb" stroke="#8fb7d6" strokeWidth="0.6" />
                  <path d="M1 2V8.5L3 7L4.5 9.5" fill="#fff" stroke="#fff" />
                  <path d="M5.5 0L4 4H7L5 8" stroke={YELLOW} />
                </Icon>
              </button>
            </div>
          </div>
          <div className="flex flex-col gap-px">
            {sections.map((s) => (
              <section key={s.title}>
                <h2 className="flex h-3 items-center justify-between bg-[#2a303c] pr-[5px] pl-1 font-bold text-[#e3e5e9]">
                  {s.title}
                  <Caret />
                </h2>
                <div className="pl-[11px]">
                  <table className="w-full table-fixed border-separate border-spacing-0 leading-[11px] whitespace-nowrap">
                    <tbody>
                      {s.rows.map((r) => (
                        <tr key={r.name}>
                          <th
                            scope="row"
                            className="w-[62px] border-b border-l border-[#2f3743] p-0 pl-[3px] text-left font-normal text-[#bfc4cc]"
                          >
                            {r.name}
                          </th>
                          <td
                            className={`border-x border-b border-[#2f3743] p-0 pl-px ${r.dim ? "text-[#858c98]" : "text-[#e3e5e9]"}`}
                          >
                            <span className="flex items-center">
                              {r.swatch && <span className="mr-1 size-[9px] border border-[#c7f3f3] bg-[#00ffff]" />}
                              {r.line && <span className="mr-0.5 h-px w-[35px] bg-[#b5bac2]" />}
                              {r.value}
                            </span>
                          </td>
                        </tr>
                      ))}
                    </tbody>
                  </table>
                </div>
              </section>
            ))}
          </div>
        </div>
      </div>
    </aside>
  );
}

function ViewCube() {
  return (
    <svg
      width="54"
      height="54"
      className="absolute top-[18px] right-1.5"
      role="img"
      aria-label="ViewCube"
      fontSize="7"
      textAnchor="middle"
    >
      <circle cx="27" cy="27" r="20" fill="none" stroke="#474d55" strokeWidth="6" />
      <rect x="17.5" y="17.5" width="19" height="19" fill="#b7b9bd" stroke="#d0d2d5" />
      <text x="27" y="31" fontSize="11" fill="#565a61">
        上
      </text>
      <g fill="#b5b9bf">
        <text x="27" y="9">
          北
        </text>
        <text x="27" y="51">
          南
        </text>
        <text x="6" y="30">
          西
        </text>
        <text x="48" y="30">
          東
        </text>
      </g>
    </svg>
  );
}

const INK = "#33373d";

function NavigationBar() {
  return (
    <div className="absolute top-[103px] right-[3px] flex w-[21px] flex-col items-center rounded-[3px] border border-[#0e1216] bg-[#9b9da0] pb-px">
      <span className="mr-0.5 self-end">
        <Icon w={5} h={5}>
          <circle cx="2.5" cy="2.5" r="1.8" stroke={INK} strokeWidth="0.8" />
        </Icon>
      </span>
      <button aria-label="ステアリング ホイール" className="mt-[5px]">
        <Icon w={15} h={15}>
          <path d="M7.5 1H14V7.5A6.5 6.5 0 1 1 7.5 1Z" stroke={INK} />
          <circle cx="7.5" cy="7.5" r="4.5" stroke={INK} />
          <circle cx="7.5" cy="7.5" r="2.3" stroke={INK} />
        </Icon>
      </button>
      <span className="mt-1">
        <TinyCaret dark />
      </span>
      <span className="mt-0.5 h-px w-4 bg-[#7b7e82]" />
      <button aria-label="画面移動" className="mt-0.5">
        <Icon w={15} h={15}>
          <path
            d="M5 14L1 8.5Q0.6 7 2 7L4 9V3Q4.8 1.6 5.6 3V7V2Q6.6 0.4 7.6 2V7V2.4Q8.7 1 9.6 2.6V7.4L11 3.8Q12.4 3.2 12.3 4.8L11.3 11L10.3 14Z"
            stroke={INK}
            fill="#c3c5c8"
          />
        </Icon>
      </button>
      <button aria-label="ズーム" className="mt-0.5">
        <Icon w={15} h={14}>
          <path d="M1 1L10 10M10 1L1 10" stroke={INK} />
          <path d="M0 0H3L0 3ZM11 0V3L8 0ZM0 11V8L3 11Z" fill={INK} stroke="none" />
          <circle cx="10.5" cy="9" r="2.6" stroke={INK} fill="#b5b7ba" />
          <path d="M12.3 11L14.5 13.5" stroke={INK} strokeWidth="1.4" />
        </Icon>
      </button>
      <span className="mt-[3px]">
        <TinyCaret dark />
      </span>
      <button aria-label="オービット" className="mt-[3px]">
        <Icon w={15} h={15}>
          <ellipse cx="7.5" cy="8" rx="6.5" ry="2.6" stroke={INK} />
          <path d="M5.8 13V3H4.5L7.5 0.5L10.5 3H9.2V13L7.5 14.5Z" stroke={INK} fill="#b5b7ba" />
        </Icon>
      </button>
      <span className="mt-[3px]">
        <TinyCaret dark />
      </span>
      <span className="mt-0.5 h-px w-4 bg-[#7b7e82]" />
      <button aria-label="ShowMotion" className="mt-0.5">
        <Icon w={15} h={15}>
          <path d="M1 1H4.5V4H1ZM6 1H9.5V4H6ZM11 1H14.5V4H11ZM1.5 6H11V14.5H1.5Z" stroke={INK} />
          <path d="M4.5 7.8V12.5L8.8 10.2Z" fill={INK} stroke="none" />
        </Icon>
      </button>
      <span className="mt-1.5 mr-0.5 self-end">
        <Icon w={5} h={5}>
          <circle cx="2.5" cy="2.5" r="1.8" stroke={INK} strokeWidth="0.8" />
        </Icon>
      </span>
    </div>
  );
}

function DrawingArea() {
  return (
    <main className="relative min-h-[261px] flex-1 overflow-hidden bg-[#21272f]">
      <SitePlan />
      <p className="absolute top-1 left-[3px] text-[7px] leading-[8px] text-[#dfe2e7]">[−][平面図][2D ワイヤフレーム]</p>
      <div className="absolute top-1.5 right-2 flex gap-1.5">
        <button aria-label="ビューを最小化">
          <Icon w={6} h={6}>
            <path d="M0 4.5H6" stroke="#f0f1f3" strokeWidth="1.3" />
          </Icon>
        </button>
        <button aria-label="ビューを元に戻す">
          <Icon w={6} h={6}>
            <path d="M0.7 2.2H4V5.4H0.7ZM2 2V0.7H5.4V4H4" stroke="#f0f1f3" />
          </Icon>
        </button>
        <button aria-label="ビューを閉じる">
          <Cross size={6} />
        </button>
      </div>
      <PropertiesPalette />
      <ViewCube />
      <button className="absolute top-[77px] right-[19px] flex h-[10px] w-7 items-center justify-between rounded-[2px] border border-[#b6b8c6] bg-[#9496a6] px-0.5 text-[6px] text-[#e6e7ee]">
        WCS
        <Icon w={5} h={3}>
          <path d="M0.5 0.5H4.5L2.5 2.6Z" strokeWidth="0.5" />
        </Icon>
      </button>
      <NavigationBar />
    </main>
  );
}

/* ---------- command line and status bar ---------- */

function CommandLine() {
  return (
    <div className="flex h-12 border-l border-[#3b4453] text-[7px] text-[#1f1f1f]">
      <div className="flex w-[15px] flex-col items-center gap-2 bg-[#2f3744] pt-[3px]">
        <Icon w={10} h={3}>
          <path d="M0 0.5H10M0 2.5H10" stroke="#9aa0a9" strokeDasharray="1 1" />
        </Icon>
        <button aria-label="コマンド ラインを閉じる">
          <Cross size={6} />
        </button>
        <button aria-label="カスタマイズ">
          <Icon w={9} h={9}>
            <path d="M0.8 8.2L5 4" stroke="#e3e5e9" strokeWidth="1.6" />
            <path d="M8.6 2.6A2.6 2.6 0 1 1 6.2 0.4L5.5 2.2L6.8 3.5Z" fill="#e3e5e9" stroke="none" />
          </Icon>
        </button>
      </div>
      <div className="mr-0.5 flex flex-1 flex-col">
        <div className="flex-1 bg-[#c8c8c8] pt-1 pl-px font-['Liberation_Mono','Noto_Sans_CJK_JP',monospace] leading-[10px]">
          <p>コマンド:</p>
          <p>終了するには［Esc］か［Enter］を押してください、または右クリックでショートカット メニューを表示。</p>
          <p>コマンド: *キャンセル*</p>
        </div>
        <label className="flex h-[13px] items-center gap-0.5 border-t border-[#6d6f72] bg-white pl-0.5">
          <Icon w={10} h={8}>
            <rect x="0.5" y="0.5" width="9" height="7" stroke="#555" />
            <path d="M0.5 1.5H9.5M2 3.5L3.5 4.5L2 5.5M4.5 6H6.5" stroke="#555" strokeWidth="0.8" />
          </Icon>
          <Caret dark />
          <input
            aria-label="コマンド"
            placeholder="ここにコマンドを入力"
            className="ml-0.5 h-3 flex-1 text-[7px] italic outline-none placeholder:text-[#7a7a7a]"
          />
        </label>
      </div>
    </div>
  );
}

type Tool = { label: string; on?: boolean; width?: string; caret?: boolean; text?: string; icon?: ReactNode };

const statusTools: Tool[] = [
  { label: "モデル空間", width: "w-5", text: "モデル" },
  { label: "グリッド", icon: <path d="M3.5 1V11M6 1V11M8.5 1V11M1 3.5H11M1 6H11M1 8.5H11" strokeWidth="0.8" /> },
  { label: "スナップ", icon: <path d="M1.5 2.5H11M1.5 6H11M1.5 9.5H11" strokeWidth="1.4" strokeDasharray="1.4 2.2" /> },
  { label: "スナップ設定", caret: true, width: "w-[11px]" },
  { label: "直交モード", icon: <path d="M2.5 1V10.5H11.5M2.5 7.5H5.5V10.5" /> },
  {
    label: "極トラッキング",
    on: true,
    icon: (
      <>
        <path d="M9.5 3.5A4.3 4.3 0 1 0 10.3 7" stroke="#fff" />
        <path d="M5.5 7L11 1.5M5.5 7H11.5" stroke="#fff" />
      </>
    ),
  },
  { label: "極トラッキング設定", caret: true, width: "w-[11px]" },
  {
    label: "アイソメ図",
    icon: (
      <>
        <path d="M6 0.5V11.5" stroke="#6fb96a" />
        <path d="M2 2L10 10" stroke="#d66a5d" />
        <path d="M1.5 2.5L6 6.5" />
      </>
    ),
  },
  { label: "アイソメ図設定", caret: true, width: "w-[11px]" },
  { label: "オブジェクト スナップ トラッキング", on: true, icon: <path d="M10.5 1.5L2 10H11" stroke="#fff" /> },
  {
    label: "オブジェクト スナップ",
    on: true,
    icon: (
      <>
        <path d="M2.5 3.5H9.5V10.5H2.5Z" stroke="#fff" />
        <path d="M1 2H4V5H1Z" fill="#fff" stroke="none" />
      </>
    ),
  },
  { label: "スナップの種類", caret: true, width: "w-[11px]" },
  {
    label: "透過性",
    on: true,
    icon: (
      <>
        <path d="M4.5 4.5H11V11H4.5Z" fill="#fff" stroke="none" />
        <path d="M1.5 1.5H6.5V3.5M1.5 1.5V6.5H3.5" stroke="#fff" />
      </>
    ),
  },
  {
    label: "注釈の表示",
    on: true,
    icon: (
      <>
        <path d="M5.5 2V7L1.8 11M5.5 7L9.5 11" stroke="#fff" strokeWidth="1.7" />
        <circle cx="9" cy="2.8" r="1.5" stroke="#fff" />
      </>
    ),
  },
  {
    label: "自動尺度",
    icon: <path d="M5.5 2.5V7L2 11M5.5 7L9 11M9 0.5V4.5M7.3 2.5H10.7" stroke="#e3e5e9" strokeWidth="1.4" />,
  },
  { label: "注釈尺度", icon: <path d="M6 2.5V7L2.6 10.5M6 7L9.4 10.5" stroke="#e3e5e9" strokeWidth="1.7" /> },
  { label: "尺度", width: "w-[13px]", text: "1:1" },
  { label: "尺度一覧", caret: true, width: "w-[9px]" },
  {
    label: "ワークスペース",
    icon: (
      <>
        <circle cx="6" cy="6" r="2.9" stroke="#e3e5e9" strokeWidth="2" />
        <path
          d="M6 0.8V2.4M6 9.6V11.2M0.8 6H2.4M9.6 6H11.2M2.3 2.3L3.5 3.5M8.5 8.5L9.7 9.7M9.7 2.3L8.5 3.5M3.5 8.5L2.3 9.7"
          stroke="#e3e5e9"
          strokeWidth="1.7"
        />
      </>
    ),
  },
  { label: "ワークスペース一覧", caret: true, width: "w-[11px]" },
  { label: "注釈モニター", icon: <path d="M6 1V11M1 6H11" stroke="#e3e5e9" strokeWidth="1.4" /> },
  {
    label: "選択の分離",
    icon: (
      <>
        <path d="M1.5 1.5H4.5V4.5H1.5ZM7 5H10.5L8.7 1.5Z" />
        <circle cx="6" cy="9" r="1.8" />
      </>
    ),
  },
  {
    label: "ハードウェア アクセラレーション",
    width: "w-4",
    icon: (
      <>
        <path d="M5 1H10V6H5Z" fill="#3f8fd6" stroke="none" />
        <path d="M1.5 6H6V10.5H1.5Z" fill={YELLOW} stroke="none" />
        <path d="M1 2H4M1 4H4" stroke={BLUE} />
        <path d="M6.5 9L8.3 11L11.5 7" stroke="#5fd070" strokeWidth="1.4" />
      </>
    ),
  },
  {
    label: "フルスクリーン表示",
    width: "w-[18px]",
    icon: <path d="M0.5 2H11.5V10H0.5ZM2.5 6V8H4.5M9.5 6V4H7.5" />,
  },
  { label: "カスタマイズ", width: "w-4", icon: <path d="M1 2H11M1 6H11M1 10H11" stroke="#e3e5e9" strokeWidth="1.2" /> },
];

function StatusBar() {
  return (
    <footer className="flex h-[19px] items-center justify-between pr-0.5 pb-0.5 pl-[10px] text-[7px] whitespace-nowrap">
      <nav className="flex items-center">
        <button aria-label="レイアウト メニュー">
          <Hamburger />
        </button>
        <button className="ml-1 h-[15px] w-10 bg-[#3b4453] text-white [clip-path:polygon(6px_0,100%_0,calc(100%-6px)_100%,0_100%)]">
          モデル
        </button>
        <button className="ml-[3px] w-7">Layout1</button>
        <span className="ml-[3px]">
          <Slash />
        </span>
        <button className="ml-1 w-7">Layout2</button>
        <span className="ml-[3px]">
          <Slash />
        </span>
        <button aria-label="新しいレイアウト" className="ml-1.5">
          <Plus />
        </button>
        <span className="ml-1.5">
          <Slash />
        </span>
      </nav>
      <div className="flex">
        {statusTools.map((t) => (
          <button
            key={t.label}
            aria-label={t.label}
            className={`flex h-[15px] items-center justify-center border-r border-[#222831] ${t.width ?? "w-[15px]"} ${t.on ? "bg-[#4f8fd0]" : "bg-[#2f3744]"}`}
          >
            {t.text}
            {t.caret && <Caret />}
            {t.icon && <Icon>{t.icon}</Icon>}
          </button>
        ))}
      </div>
    </footer>
  );
}

export default function App() {
  return (
    <div
      lang="ja"
      className="flex min-h-screen flex-col border-t border-r border-b-2 border-l-2 border-[#0b6c9c] bg-[#222831] font-['Open_Sans','Noto_Sans_CJK_JP',sans-serif] text-[#dadde2] [font-feature-settings:'palt']"
    >
      <TitleBar />
      <RibbonTabs />
      <Ribbon />
      <FileTabs />
      <div className="h-[3px] bg-[#3b4453]" />
      <DrawingArea />
      <div className="h-[3px] bg-[#3b4453]" />
      <CommandLine />
      <div className="h-0.5 bg-[#3b4453]" />
      <StatusBar />
    </div>
  );
}
